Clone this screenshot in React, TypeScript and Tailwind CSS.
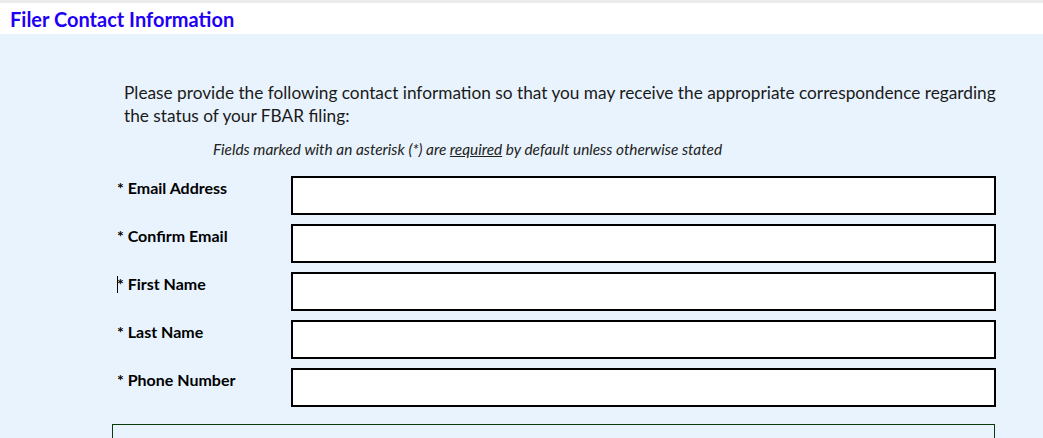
import React from 'react';

const fields = ['Email Address', 'Confirm Email', 'First Name', 'Last Name', 'Phone Number'];

export default function App() {
  return (
    <div className="w-[1043px] h-[438px] overflow-hidden bg-[#e8f3fd] font-['Lato',sans-serif] text-[#111]">
      {/* header */}
      <div className="h-[3px] bg-[#ececec]" />
      <div className="h-[31px] bg-white flex items-center pl-[10px]">
        <h1 className="text-[20px] font-bold text-[#1f00f5] leading-none">Filer Contact Information</h1>
      </div>

      <div className="pl-[112px] pr-[40px] pt-[47px]">
        <p className="pl-[12px] text-[17.25px] leading-[23px] text-[#1a1a1a]">
          Please provide the following contact information so that you may receive the appropriate correspondence regarding the status of your FBAR filing:
        </p>
        <p className="pl-[101px] mt-[13px] text-[15.4px] italic text-[#222] leading-[18px]">
          Fields marked with an asterisk (*) are <span className="underline">required</span> by default unless otherwise stated
        </p>

        <div className="mt-[18px] flex flex-col gap-[9px]">
          {fields.map((f, i) => (
            <div key={f} className="flex items-start">
              <label className="w-[179px] pl-[5px] pt-[2px] text-[16px] font-bold leading-[20px] text-black flex items-center">
                {i === 2 && <span className="w-px h-[17px] bg-black -mr-px" />}
                * {f}
              </label>
              <input className="w-[705px] h-[39px] bg-white border-2 border-black outline-none px-2" />
            </div>
          ))}
        </div>

        <div className="mt-[17px] w-[883px] h-[40px] border border-[#0a3a0a]" />
      </div>
    </div>
  );
}
